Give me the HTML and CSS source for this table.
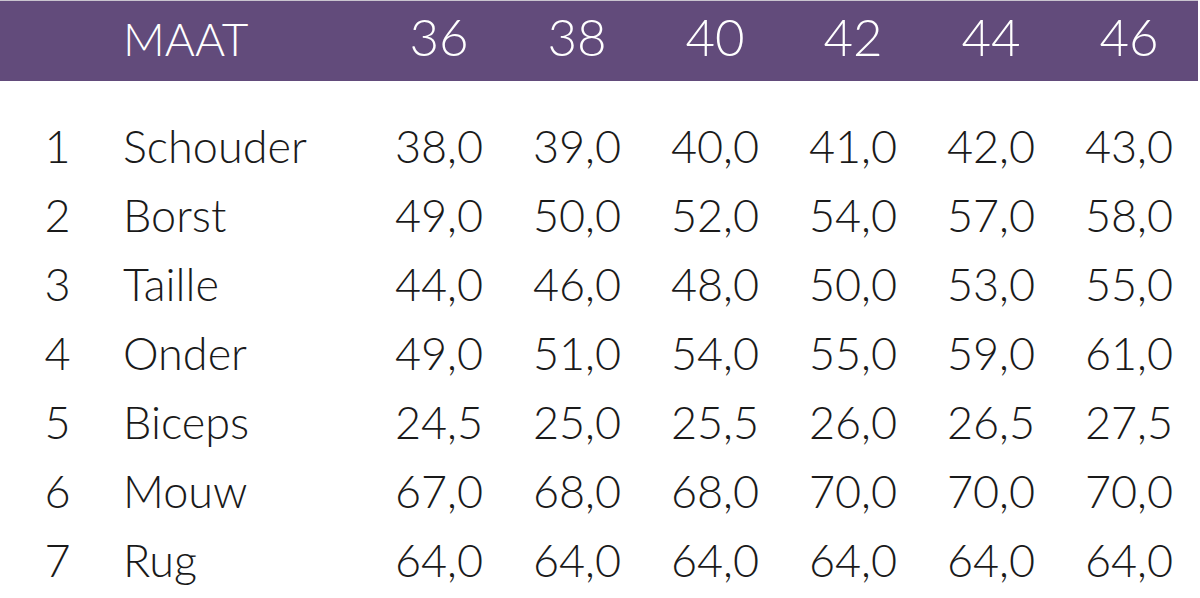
FILE: index.html
```html
<!DOCTYPE html>
<html lang="nl">
<head>
<meta charset="utf-8">
<title>Maattabel</title>
<link rel="stylesheet" href="styles.css">
</head>
<body>
<div class="table">
  <div class="row head">
    <div class="num"></div><div class="name label">MAAT</div>
    <div class="val">36</div><div class="val">38</div><div class="val">40</div><div class="val">42</div><div class="val">44</div><div class="val">46</div>
  </div>
  <div class="body">
    <div class="row"><div class="num">1</div><div class="name">Schouder</div><div class="val">38,0</div><div class="val">39,0</div><div class="val">40,0</div><div class="val">41,0</div><div class="val">42,0</div><div class="val">43,0</div></div>
    <div class="row"><div class="num">2</div><div class="name">Borst</div><div class="val">49,0</div><div class="val">50,0</div><div class="val">52,0</div><div class="val">54,0</div><div class="val">57,0</div><div class="val">58,0</div></div>
    <div class="row"><div class="num">3</div><div class="name">Taille</div><div class="val">44,0</div><div class="val">46,0</div><div class="val">48,0</div><div class="val">50,0</div><div class="val">53,0</div><div class="val">55,0</div></div>
    <div class="row"><div class="num">4</div><div class="name">Onder</div><div class="val">49,0</div><div class="val">51,0</div><div class="val">54,0</div><div class="val">55,0</div><div class="val">59,0</div><div class="val">61,0</div></div>
    <div class="row"><div class="num">5</div><div class="name">Biceps</div><div class="val">24,5</div><div class="val">25,0</div><div class="val">25,5</div><div class="val">26,0</div><div class="val">26,5</div><div class="val">27,5</div></div>
    <div class="row"><div class="num">6</div><div class="name">Mouw</div><div class="val">67,0</div><div class="val">68,0</div><div class="val">68,0</div><div class="val">70,0</div><div class="val">70,0</div><div class="val">70,0</div></div>
    <div class="row"><div class="num">7</div><div class="name">Rug</div><div class="val">64,0</div><div class="val">64,0</div><div class="val">64,0</div><div class="val">64,0</div><div class="val">64,0</div><div class="val">64,0</div></div>
  </div>
</div>
</body>
</html>
```
FILE: styles.css
```css
html, body {
  margin: 0;
  padding: 0;
  background: #ffffff;
}
body {
  font-family: "Lato", "Open Sans", sans-serif;
  color: #1a1a1a;
  width: 1200px;
  height: 598px;
  overflow: hidden;
}
.table {
  width: 1198px;
}
.row {
  display: grid;
  grid-template-columns: 115px 255px repeat(6, 138px);
  align-items: center;
  height: 69px;
  font-size: 45px;
  font-weight: 300;
}
.head {
  box-sizing: border-box;
  height: 81px;
  border-top: 1px solid #c9c4cf;
  padding-bottom: 9px;
  background: #624b7b;
  color: #ffffff;
  font-size: 51px;
  font-weight: 300;
}
.head .label {
  font-size: 46px;
  padding-top: 4px;
}
.body {
  padding-top: 30px;
}
.num {
  text-align: center;
}
.name {
  padding-left: 8px;
}
.val {
  text-align: center;
}
```
